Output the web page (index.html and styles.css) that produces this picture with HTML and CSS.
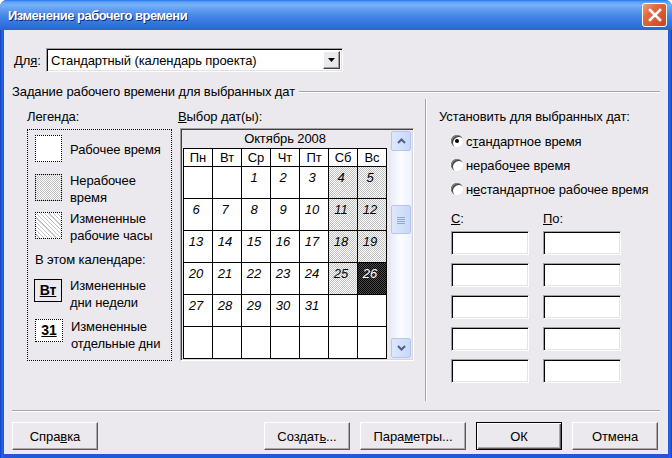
FILE: index.html
```html
<!DOCTYPE html>
<html lang="ru">
<head>
    <meta charset="UTF-8">
    <title>Изменение рабочего времени</title>
    <link rel="stylesheet" href="styles.css">
</head>
<body>
    <div class="window">
        <div class="titlebar">
            <span class="title">Изменение рабочего времени</span>
            <span class="close">
                <svg width="14" height="14" viewBox="0 0 14 14"><path d="M2 2L12 12M12 2L2 12" stroke="#fff" stroke-width="2.6" stroke-linecap="square"/></svg>
            </span>
        </div>

        <div class="client">
            <div class="for-row">
                <span class="for-label">Дл<u>я</u>:</span>
                <div class="combo sunken">
                    <span class="combo-text">Стандартный (календарь проекта)</span>
                    <span class="combo-btn">
                        <svg width="7" height="4" viewBox="0 0 7 4"><path d="M0 0H7L3.5 4Z" fill="#000"/></svg>
                    </span>
                </div>
            </div>

            <div class="group-head">
                <span>Задание рабочего времени для выбранных дат</span>
                <span class="line"></span>
            </div>

            <div class="main">
                <div class="legend-col">
                    <div class="cap">Легенда:</div>
                    <div class="legend">
                        <div class="item item-single">
                            <span class="sw sw-work"></span>
                            <span class="item-text">Рабочее время</span>
                        </div>
                        <div class="item item-2">
                            <span class="sw sw-off"></span>
                            <span class="item-text">Нерабочее<br>время</span>
                        </div>
                        <div class="item item-3">
                            <span class="sw sw-changed"></span>
                            <span class="item-text">Измененные<br>рабочие часы</span>
                        </div>
                        <div class="sub">В этом календаре:</div>
                        <div class="item item-4">
                            <span class="mark mark-day"><u>Вт</u></span>
                            <span class="item-text">Измененные<br>дни недели</span>
                        </div>
                        <div class="item item-5">
                            <span class="mark mark-date"><u>31</u></span>
                            <span class="item-text">Измененные<br>отдельные дни</span>
                        </div>
                    </div>
                </div>

                <div class="dates-col">
                    <div class="cap"><u>В</u>ыбор дат(ы):</div>
                    <div class="cal-frame">
                        <div class="cal">
                            <div class="month">Октябрь 2008</div>
                            <div class="cal-grid">
                                <div class="dow">Пн</div><div class="dow">Вт</div><div class="dow">Ср</div><div class="dow">Чт</div><div class="dow">Пт</div><div class="dow">Сб</div><div class="dow">Вс</div>
                                <div class="day"></div><div class="day"></div><div class="day">1</div><div class="day">2</div><div class="day">3</div><div class="day off">4</div><div class="day off">5</div>
                                <div class="day">6</div><div class="day">7</div><div class="day">8</div><div class="day">9</div><div class="day">10</div><div class="day off">11</div><div class="day off">12</div>
                                <div class="day">13</div><div class="day">14</div><div class="day">15</div><div class="day">16</div><div class="day">17</div><div class="day off">18</div><div class="day off">19</div>
                                <div class="day">20</div><div class="day">21</div><div class="day">22</div><div class="day">23</div><div class="day">24</div><div class="day off">25</div><div class="day selected">26</div>
                                <div class="day">27</div><div class="day">28</div><div class="day">29</div><div class="day">30</div><div class="day">31</div><div class="day"></div><div class="day"></div>
                                <div class="day"></div><div class="day"></div><div class="day"></div><div class="day"></div><div class="day"></div><div class="day"></div><div class="day"></div>
                            </div>
                        </div>
                        <div class="scroll">
                            <span class="sb-btn">
                                <svg width="9" height="6" viewBox="0 0 9 6"><path d="M1 5L4.5 1.5L8 5" fill="none" stroke="#4d6185" stroke-width="2"/></svg>
                            </span>
                            <span class="sb-track">
                                <span class="sb-thumb">
                                    <svg width="8" height="8" viewBox="0 0 8 8"><path d="M0 1.5H8M0 3.5H8M0 5.5H8M0 7.5H8" stroke="#8fa6d8" stroke-width="1"/></svg>
                                </span>
                            </span>
                            <span class="sb-btn">
                                <svg width="9" height="6" viewBox="0 0 9 6"><path d="M1 1L4.5 4.5L8 1" fill="none" stroke="#4d6185" stroke-width="2"/></svg>
                            </span>
                        </div>
                    </div>
                </div>

                <div class="set-col">
                    <div class="cap">Установить для выбранных дат:</div>
                    <div class="radios">
                        <label class="radio-row"><span class="radio checked"></span>с<u>т</u>андартное время</label>
                        <label class="radio-row"><span class="radio"></span>нерабо<u>ч</u>ее время</label>
                        <label class="radio-row"><span class="radio"></span>н<u>е</u>стандартное рабочее время</label>
                    </div>
                    <div class="field-labels">
                        <span><u>С</u>:</span>
                        <span><u>П</u>о:</span>
                    </div>
                    <div class="fields">
                        <span class="field sunken"></span><span class="field sunken"></span>
                        <span class="field sunken"></span><span class="field sunken"></span>
                        <span class="field sunken"></span><span class="field sunken"></span>
                        <span class="field sunken"></span><span class="field sunken"></span>
                        <span class="field sunken"></span><span class="field sunken"></span>
                    </div>
                </div>
            </div>

            <div class="bottom-sep"></div>

            <div class="buttons">
                <span class="btn">Спра<u>в</u>ка</span>
                <span class="btn btn-create">Создат<u>ь</u>...</span>
                <span class="btn btn-wide">Пара<u>м</u>етры...</span>
                <span class="btn btn-default">ОК</span>
                <span class="btn">Отмена</span>
            </div>
        </div>
    </div>
</body>
</html>
```

FILE: styles.css
```css
* { box-sizing: border-box; }
body {
    margin: 0;
    background: #fff;
    font-family: "Liberation Sans", Arial, sans-serif;
    font-size: 13px;
    letter-spacing: -0.1px;
    color: #000;
}
u { text-underline-offset: 1px; }

.window {
    width: 672px;
    height: 458px;
    display: flex;
    flex-direction: column;
    background: linear-gradient(to right, #0b3fc6 0, #2a64dc 2px, #2157d8 4px, #2157d8 668px, #2a64dc 670px, #0b3fc6 672px);
    border-radius: 7px 7px 0 0;
    overflow: hidden;
}
.titlebar {
    height: 30px;
    flex: none;
    display: flex;
    align-items: center;
    justify-content: space-between;
    padding: 0 5px 0 8px;
    background: linear-gradient(#2a6ff0 0, #5ea4fa 2px, #78b2f6 5px, #5f9cf0 10px, #4184e6 17px, #3473dd 24px, #2c64d2 30px);
}
.title {
    color: #fff;
    font-weight: bold;
    font-size: 13px;
    letter-spacing: -0.5px;
    text-shadow: 1px 1px 0 #0b2a84;
}
.close {
    width: 25px;
    height: 24px;
    display: flex;
    align-items: center;
    justify-content: center;
    border: 1px solid #fff;
    border-radius: 3px;
    background: linear-gradient(135deg, #f39a7b 0, #e4683f 35%, #d8552c 70%, #c4441f 100%);
}

.client {
    flex: 1;
    margin: 0 4px 4px;
    background: #ebe9ed;
}
.sunken {
    border: 1px solid;
    border-color: #a0a0a0 #fff #fff #a0a0a0;
    box-shadow: inset 1px 1px #000, inset -1px -1px #e3e3e3;
    background: #fff;
}

.for-row {
    display: flex;
    align-items: center;
    height: 24px;
    margin-top: 18px;
}
.for-label { width: 42px; padding-left: 10px; }
.combo {
    width: 297px;
    height: 24px;
    display: flex;
    align-items: center;
    padding: 2px;
}
.combo-text { flex: 1; padding-left: 2px; }
.combo-btn {
    width: 17px;
    height: 18px;
    display: flex;
    align-items: center;
    justify-content: center;
    background: #ebe9ed;
    border: 1px solid;
    border-color: #fff #404040 #404040 #fff;
    box-shadow: inset -1px -1px #a0a0a0;
}

.group-head {
    display: flex;
    align-items: center;
    height: 15px;
    margin: 12px 8px 0;
}
.group-head .line {
    flex: 1;
    margin-left: 4px;
    border-top: 1px solid #a5a4a8;
    border-bottom: 1px solid #fff;
}

.main { display: flex; height: 302px; }
.cap { height: 15px; line-height: 15px; }

.legend-col { width: 145px; margin-left: 23px; padding-top: 10px; }
.legend {
    height: 232px;
    margin-top: 5px;
    padding: 5px 0 0 7px;
    border: 1px dotted #000;
}
.item {
    display: flex;
    align-items: flex-start;
    height: 27px;
    line-height: 17px;
}
.item-text { margin: -2px 0 0 8px; white-space: nowrap; }
.item-single { align-items: center; }
.item-single .item-text { margin-top: 2px; }
.item-2 { margin-top: 12px; }
.item-3 { margin-top: 11px; }
.item-4 { margin-top: 11px; height: 23px; }
.item-5 { margin-top: 17px; height: 23px; }
.item-5 .item-text { margin-top: -1px; }
.sub { margin: 13px 0 0; line-height: 16px; }
.sw {
    width: 27px;
    height: 27px;
    flex: none;
    border: 1px dotted #000;
}
.sw-work { background: #fff; }
.sw-off { background: repeating-conic-gradient(#c0c0c0 0 25%, #fff 0 50%) 0 0 / 2px 2px; }
.sw-changed { background: repeating-linear-gradient(45deg, #fff 0 2px, #c4c4c4 2px 3px); }
.mark {
    width: 28px;
    height: 23px;
    flex: none;
    display: flex;
    align-items: center;
    justify-content: center;
    font-weight: bold;
    font-size: 14px;
}
.mark-day { margin-left: -1px; border: 1px solid #000; }
.mark-date { border: 1px dotted #000; background: #fff; }
.item-4 .item-text { margin-left: 8px; }

.dates-col { margin-left: 6px; padding-top: 10px; }
.cal-frame {
    width: 234px;
    height: 233px;
    margin: 4px 0 0 2px;
    display: flex;
    border: 1px solid;
    border-color: #a0a0a0 #fff #fff #a0a0a0;
    box-shadow: inset 1px 1px #404040, inset -1px -1px #d8d6da;
    padding: 1px 2px 1px 2px;
}
.month { height: 18px; line-height: 18px; text-align: center; }
.cal-grid {
    display: grid;
    grid-template-columns: repeat(7, 28px);
    grid-template-rows: 17px repeat(6, 31px);
    gap: 1px;
    background: #000;
    border: 1px solid #000;
}
.dow { background: #fff; text-align: center; line-height: 17px; }
.day {
    background: #fff;
    font-style: italic;
    text-align: center;
    padding: 3px 4px 0 0;
    line-height: 15px;
}
.day.off { background: repeating-conic-gradient(#c0c0c0 0 25%, #fff 0 50%) 0 0 / 2px 2px; }
.day.selected { background: repeating-conic-gradient(#000 0 25%, #4a4a4a 0 50%) 0 0 / 2px 2px; color: #fff; }

.scroll {
    width: 20px;
    height: 227px;
    margin: 1px 0 0 4px;
    display: flex;
    flex-direction: column;
    background: linear-gradient(to right, #e6eefc, #fbfcff 45%, #eef3fd);
}
.sb-btn, .sb-thumb {
    display: flex;
    align-items: center;
    justify-content: center;
    border: 1px solid #b4c6ee;
    border-radius: 2px;
    background: linear-gradient(to right, #dde8fd, #c8d8f8);
}
.sb-btn { height: 20px; flex: none; }
.sb-track { flex: 1; padding-top: 54px; }
.sb-thumb { height: 29px; }

.set-col {
    flex: 1;
    margin-left: 11px;
    padding: 10px 0 0 13px;
    border-left: 1px solid #a5a4a8;
    box-shadow: inset 1px 0 #fff;
}
.radios { margin-top: 5px; }
.radio-row {
    display: flex;
    align-items: center;
    height: 24px;
    padding-left: 12px;
}
.radio {
    width: 12px;
    height: 12px;
    margin-right: 3px;
    border-radius: 50%;
    background: #fff;
    box-shadow: inset 1px 1px #808080, inset 2px 2px #404040;
    position: relative;
}
.radio.checked::after {
    content: "";
    position: absolute;
    left: 4px;
    top: 4px;
    width: 4px;
    height: 4px;
    border-radius: 50%;
    background: #000;
}
.field-labels, .fields {
    display: grid;
    grid-template-columns: 78px 78px;
    column-gap: 14px;
    margin-left: 12px;
}
.field-labels { margin-top: 10px; line-height: 15px; }
.fields { margin-top: 5px; row-gap: 8px; }
.field { height: 24px; }

.bottom-sep {
    margin: 9px 8px 0;
    border-top: 1px solid #a5a4a8;
    border-bottom: 1px solid #fff;
}
.buttons { display: flex; gap: 10px; margin-top: 10px; padding-left: 8px; }
.btn {
    width: 86px;
    height: 28px;
    display: flex;
    align-items: center;
    justify-content: center;
    background: #ebe9ed;
    border: 1px solid;
    border-color: #fff #5a5a5a #5a5a5a #fff;
    box-shadow: inset -1px -1px #a8a8a8;
}
.btn-create { margin-left: 156px; }
.btn-wide { width: 106px; }
.btn-default {
    border-color: #000;
    box-shadow: inset 1px 1px #fff, inset -1px -1px #5a5a5a, inset -2px -2px #a8a8a8;
}
```
